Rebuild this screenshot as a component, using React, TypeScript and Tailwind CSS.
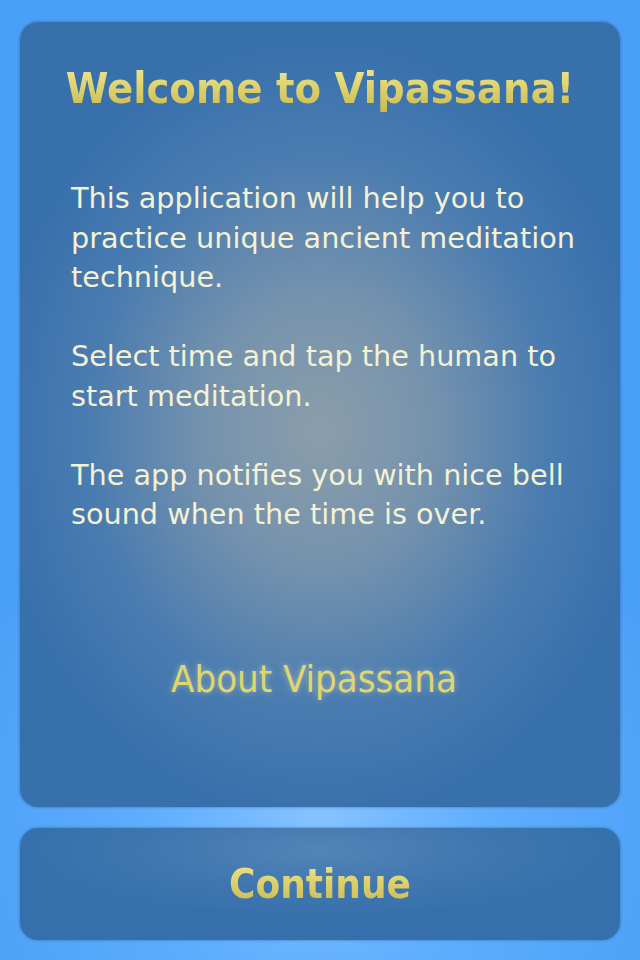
import React from "react";

export default function App() {
  return (
    <div className="w-[640px] h-[960px] flex flex-col px-[20px] pt-[22px] pb-[20px] gap-[21px] font-['DejaVu_Sans_Condensed','DejaVu_Sans',sans-serif] bg-[radial-gradient(ellipse_60%_40%_at_50%_85%,#86c2ff_0%,#5eaefe_45%,#4a9ff6_100%)]">
      <div className="h-[785px] shrink-0 rounded-[18px] flex flex-col items-stretch bg-[radial-gradient(ellipse_55%_50%_at_50%_52%,#8a9eab_0%,#7592ad_35%,#4a7cb0_70%,#3870ac_100%)] shadow-[0_0_3px_rgba(20,60,110,0.5)]">
        <h1 className="text-center mt-[42px] text-[43px] leading-[48px] font-bold bg-[linear-gradient(#f2e98e,#c9b94e)] bg-clip-text text-transparent">
          Welcome to Vipassana!
        </h1>
        <div className="pl-[51px] mt-[67px] text-[28.7px] leading-[39.5px] text-[#f4f1d4] whitespace-nowrap font-['DejaVu_Sans','Liberation_Sans',sans-serif]">
          <p>
            This application will help you to
            <br />
            practice unique ancient meditation
            <br />
            technique.
          </p>
          <p className="mt-[39.5px]">
            Select time and tap the human to
            <br />
            start meditation.
          </p>
          <p className="mt-[39.5px]">
            The app notifies you with nice bell
            <br />
            sound when the time is over.
          </p>
        </div>
        <div className="mt-[122px] pr-[12px] text-center text-[38px] leading-[44px] text-[#e0d66e] [text-shadow:0_0_6px_rgba(255,250,180,0.45)]">
          About Vipassana
        </div>
      </div>
      <div className="h-[112px] shrink-0 rounded-[18px] flex items-center justify-center bg-[radial-gradient(ellipse_50%_60%_at_50%_20%,#5384b6_0%,#3f76af_60%,#3670ac_100%)] shadow-[0_0_3px_rgba(20,60,110,0.5)]">
        <span className="text-[40px] leading-[46px] font-bold bg-[linear-gradient(#f0e58a,#c8b84c)] bg-clip-text text-transparent">
          Continue
        </span>
      </div>
    </div>
  );
}
